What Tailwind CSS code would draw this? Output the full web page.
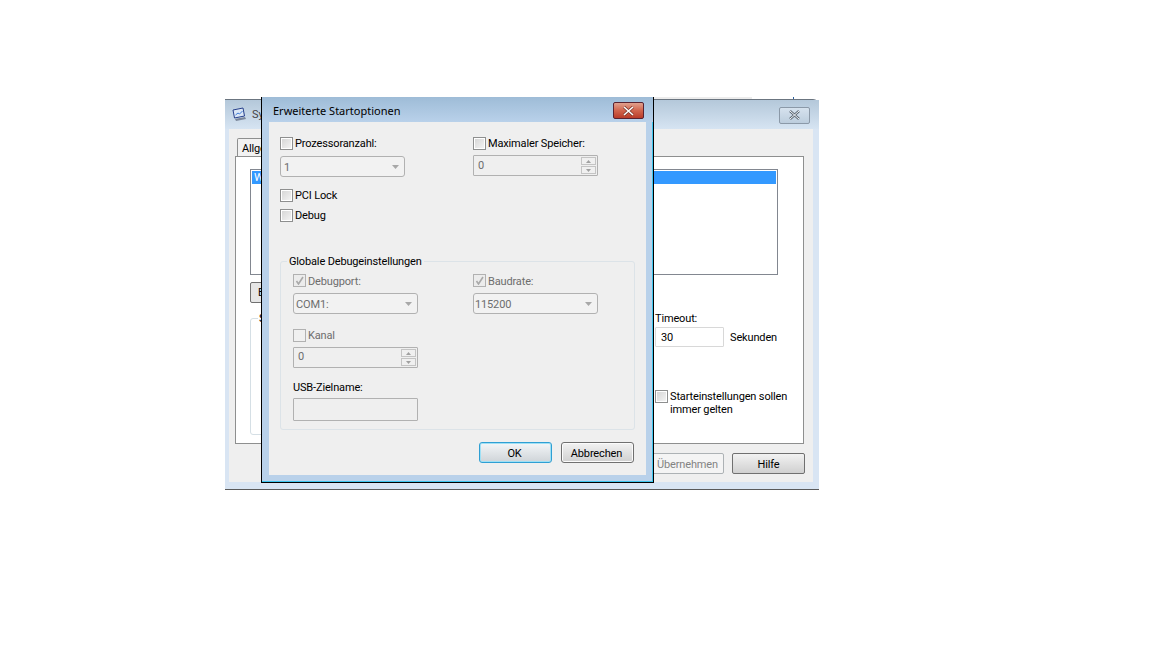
<!DOCTYPE html>
<html lang="de">
<head>
  <meta charset="UTF-8">
  <title>Erweiterte Startoptionen</title>
  <script src="https://cdn.jsdelivr.net/npm/@tailwindcss/browser@4"></script>
</head>
<body class="bg-white text-black font-['Roboto',sans-serif] text-[11px] leading-[13px] tracking-[-0.15px]">
<div class="relative w-[1152px] h-[648px] overflow-hidden bg-white">

  <!-- leftovers above the back window -->
  <div class="absolute left-[654px] top-[97px] w-[98px] h-[2px] bg-[#ececec]"></div>
  <div class="absolute left-[793px] top-[97px] w-px h-[2px] bg-[#2a5f9e]"></div>

  <!-- Back window -->
  <div class="absolute left-[225px] top-[99px] w-[594px] h-[391px] flex flex-col rounded-tr-[6px] border-t border-b border-t-[#6b7580] border-b-[#5a5a5a] bg-[#d9e5f3]">
    <div class="h-[29px] shrink-0 flex items-center justify-between pl-[7px] pr-[9px] bg-gradient-to-b from-[#b4c8da] to-[#d6e4f2]">
      <div class="flex items-center gap-[5px]">
        <svg width="15" height="15" viewBox="0 0 15 15"><path d="M1 3l10-2 1.500 8-10 2z" fill="#dbe7f6" stroke="#27408b"/><path d="M3.500 8l2.500-2 1.500 1 3-3" stroke="#3d7ad6" fill="none"/><path d="M3 12l10-2 1 2-10 2z" fill="#7a869a"/></svg>
        <span class="text-[#444]">Sy</span>
      </div>
      <div class="w-[31px] h-[17px] mt-[1px] rounded-[2px] border border-[#8b99a8] bg-gradient-to-b from-[#d6e2ee] to-[#bccddd] flex items-center justify-center">
        <svg width="13" height="10" viewBox="0 0 13 10"><path d="M2 1l9 8M11 1l-9 8" stroke="#5b6672" stroke-width="2.4"/><path d="M2 1l9 8M11 1l-9 8" stroke="#f4f7fa" stroke-width="1"/></svg>
      </div>
    </div>
    <div class="ml-[4px] mr-[6px] h-[353px] bg-[#efefef] px-[6px] pt-[9px]">
      <div class="w-[60px] h-[19px] ml-[2px] -mb-px bg-[#f2f2f2] border border-b-0 border-[#8e8f8f] rounded-t-[2px] pl-[4px] pt-[3px]">Allge</div>
      <div class="w-[569px] h-[288px] bg-white border border-[#8e8f8f] px-[14px] pt-[12px]">
        <div class="w-[528px] h-[106px] border border-[#828790] p-[1px]">
          <div class="h-[13px] bg-[#3399ff] text-white pl-[2px]">W</div>
        </div>
        <div class="w-[73px] h-[21px] mt-[7px] rounded-[2px] border border-[#707070] bg-[#e6e6e6] pl-[7px] pt-[3px]">E</div>
        <div class="flex mt-[15px]">
          <div class="relative w-[300px] h-[117px] rounded-[3px] border border-[#d5dfe5] shrink-0">
            <span class="absolute left-[7px] -top-[7px] bg-white px-px">S</span>
          </div>
          <div class="ml-[105px] w-[150px] -mt-[6px]">
            <div class="h-[13px]">Timeout:</div>
            <div class="flex items-center mt-[2px] gap-[6px]">
              <div class="w-[69px] h-[20px] border border-[#d8d8d8] rounded-[1px] pl-[5px] pt-[3px]">30</div>
              <span>Sekunden</span>
            </div>
            <div class="flex mt-[43px] gap-[2px]">
              <div class="w-[13px] h-[13px] border border-[#8e8f8f] bg-gradient-to-br from-[#d4d4d4] to-[#f6f6f6] shadow-[inset_0_0_0_1px_#fff] shrink-0"></div>
              <div class="whitespace-nowrap">Starteinstellungen sollen<br>immer gelten</div>
            </div>
          </div>
        </div>
      </div>
      <div class="flex justify-end gap-[8px] mt-[9px] mr-[2px]">
        <div class="w-[73px] h-[21px] rounded-[2px] border border-[#adb2b5] bg-[#f4f4f4] text-[#838383] text-center pt-[4px]">Übernehmen</div>
        <div class="w-[73px] h-[21px] rounded-[2px] border border-[#707070] bg-gradient-to-b from-[#f2f2f2] to-[#d0d0d0] text-center pt-[4px]">Hilfe</div>
      </div>
    </div>
  </div>

  <!-- Front dialog -->
  <div class="absolute left-[261px] top-[97px] w-[393px] h-[386px] flex flex-col border-x border-b border-black bg-[#b9d1ea] shadow-[inset_-1px_-1px_0_#3fc6ee]">
    <div class="h-[25px] shrink-0 flex items-start justify-between pl-[11px] pr-[9px] bg-gradient-to-b from-[#9ebcd7] to-[#b9d1ea]">
      <span class="mt-[7px] text-black font-['Noto_Sans',sans-serif] tracking-normal">Erweiterte Startoptionen</span>
      <div class="w-[31px] h-[17px] mt-[5px] rounded-[2px] border border-[#5a2230] bg-gradient-to-b from-[#e0a08e] via-[#d1644d] to-[#b93a28] flex items-center justify-center">
        <svg width="13" height="10" viewBox="0 0 13 10"><path d="M2 1l9 8M11 1l-9 8" stroke="#7a3328" stroke-width="3"/><path d="M2 1l9 8M11 1l-9 8" stroke="#fff" stroke-width="1.6"/></svg>
      </div>
    </div>
    <div class="mx-[7px] h-[353px] bg-[#efefef] pl-[11px] pt-[15px]">

      <div class="flex">
        <div class="w-[193px]">
          <label class="flex items-center gap-[2px] h-[13px]">
            <span class="w-[13px] h-[13px] border border-[#8e8f8f] bg-gradient-to-br from-[#d4d4d4] to-[#f6f6f6] shadow-[inset_0_0_0_1px_#fff]"></span>Prozessoranzahl:
          </label>
          <div class="mt-[6px] w-[125px] h-[21px] rounded-[3px] border border-[#b1b1b1] bg-[#f2f2f2] flex items-center justify-between pl-[3px] pr-[5px] text-[#6d6d6d]">
            <span class="pt-[2px]">1</span>
            <svg width="7" height="4" viewBox="0 0 7 4"><path d="M0 0h7L3.500 4z" fill="#a8a8a8"/></svg>
          </div>
          <label class="flex items-center gap-[2px] h-[13px] mt-[12px]">
            <span class="w-[13px] h-[13px] border border-[#8e8f8f] bg-gradient-to-br from-[#d4d4d4] to-[#f6f6f6] shadow-[inset_0_0_0_1px_#fff]"></span>PCI Lock
          </label>
          <label class="flex items-center gap-[2px] h-[13px] mt-[7px]">
            <span class="w-[13px] h-[13px] border border-[#8e8f8f] bg-gradient-to-br from-[#d4d4d4] to-[#f6f6f6] shadow-[inset_0_0_0_1px_#fff]"></span>Debug
          </label>
        </div>
        <div>
          <label class="flex items-center gap-[2px] h-[13px]">
            <span class="w-[13px] h-[13px] border border-[#8e8f8f] bg-gradient-to-br from-[#d4d4d4] to-[#f6f6f6] shadow-[inset_0_0_0_1px_#fff]"></span>Maximaler Speicher:
          </label>
          <div class="mt-[5px] w-[125px] h-[21px] border border-[#b1b1b1] rounded-[1px] bg-[#efefef] flex items-center justify-between pl-[4px] pr-[1px] text-[#6d6d6d]">
            0
            <div class="flex flex-col gap-px">
              <div class="w-[15px] h-[8px] border border-[#c4c4c4] bg-[#f0f0f0] flex items-center justify-center"><svg width="5" height="3" viewBox="0 0 5 3"><path d="M2.500 0L5 3H0z" fill="#a0a0a0"/></svg></div>
              <div class="w-[15px] h-[8px] border border-[#c4c4c4] bg-[#f0f0f0] flex items-center justify-center"><svg width="5" height="3" viewBox="0 0 5 3"><path d="M0 0h5L2.500 3z" fill="#a0a0a0"/></svg></div>
            </div>
          </div>
        </div>
      </div>

      <!-- Globale Debugeinstellungen -->
      <div class="relative mt-[39px] w-[355px] h-[169px] border border-[#dce3e8] rounded-[3px] pl-[12px] pt-[12px]">
        <span class="absolute left-[6px] -top-[7px] bg-[#efefef] px-[2px]">Globale Debugeinstellungen</span>
        <div class="flex">
          <div class="w-[180px]">
            <label class="flex items-center gap-[2px] h-[13px] text-[#6d6d6d]">
              <span class="w-[13px] h-[13px] border border-[#b1b1b1] bg-[#ececec] flex items-center justify-center"><svg width="9" height="9" viewBox="0 0 9 9"><path d="M1.500 5l2 3L8 1" fill="none" stroke="#a9a9a9" stroke-width="1.600"/></svg></span><span class="pt-[2px]">Debugport:</span>
            </label>
            <div class="mt-[6px] w-[125px] h-[21px] rounded-[3px] border border-[#b1b1b1] bg-[#f2f2f2] flex items-center justify-between pl-[2px] pr-[5px] text-[#6d6d6d]">
              <span class="pt-[2px]">COM1:</span>
              <svg width="7" height="4" viewBox="0 0 7 4"><path d="M0 0h7L3.500 4z" fill="#a8a8a8"/></svg>
            </div>
            <label class="flex items-center gap-[2px] h-[13px] mt-[15px] text-[#6d6d6d]">
              <span class="w-[13px] h-[13px] border border-[#b1b1b1] bg-[#f0f0f0]"></span>Kanal
            </label>
            <div class="mt-[5px] w-[125px] h-[21px] border border-[#b1b1b1] rounded-[1px] bg-[#efefef] flex items-center justify-between pl-[4px] pr-[1px] text-[#6d6d6d]">
              <span class="pb-[2px]">0</span>
              <div class="flex flex-col gap-px">
                <div class="w-[15px] h-[8px] border border-[#c4c4c4] bg-[#f0f0f0] flex items-center justify-center"><svg width="5" height="3" viewBox="0 0 5 3"><path d="M2.500 0L5 3H0z" fill="#a0a0a0"/></svg></div>
                <div class="w-[15px] h-[8px] border border-[#c4c4c4] bg-[#f0f0f0] flex items-center justify-center"><svg width="5" height="3" viewBox="0 0 5 3"><path d="M0 0h5L2.500 3z" fill="#a0a0a0"/></svg></div>
              </div>
            </div>
            <div class="mt-[13px] h-[13px]">USB-Zielname:</div>
            <div class="mt-[4px] w-[125px] h-[23px] border border-[#b1b1b1] rounded-[1px] bg-[#efefef]"></div>
          </div>
          <div>
            <label class="flex items-center gap-[2px] h-[13px] text-[#6d6d6d]">
              <span class="w-[13px] h-[13px] border border-[#b1b1b1] bg-[#ececec] flex items-center justify-center"><svg width="9" height="9" viewBox="0 0 9 9"><path d="M1.500 5l2 3L8 1" fill="none" stroke="#a9a9a9" stroke-width="1.600"/></svg></span><span class="pt-[2px]">Baudrate:</span>
            </label>
            <div class="mt-[6px] w-[125px] h-[21px] rounded-[3px] border border-[#b1b1b1] bg-[#f2f2f2] flex items-center justify-between pl-[1px] pr-[5px] text-[#6d6d6d]">
              <span class="pt-[2px]">115200</span>
              <svg width="7" height="4" viewBox="0 0 7 4"><path d="M0 0h7L3.500 4z" fill="#a8a8a8"/></svg>
            </div>
          </div>
        </div>
      </div>

      <div class="flex justify-end gap-[9px] mt-[12px] pr-[12px]">
        <div class="w-[73px] h-[21px] rounded-[3px] border border-[#2f9fd3] bg-gradient-to-b from-[#f3f6f8] to-[#cfd4d8] shadow-[inset_0_0_0_1px_#9fe0f5] flex items-center justify-center pt-[2px] pr-[2px]">OK</div>
        <div class="w-[73px] h-[21px] rounded-[3px] border border-[#707070] bg-gradient-to-b from-[#f2f2f2] to-[#d0d0d0] shadow-[inset_0_0_0_1px_#fbfbfb] flex items-center justify-center pt-[2px] pr-[2px]">Abbrechen</div>
      </div>
    </div>
  </div>

</div>
</body>
</html>
